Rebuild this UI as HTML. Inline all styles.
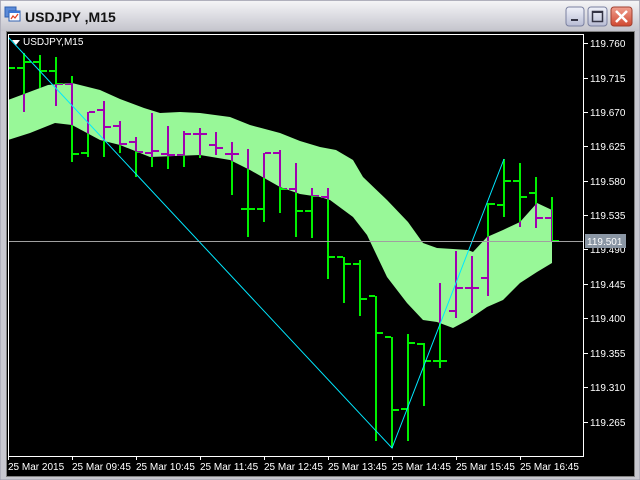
<!DOCTYPE html>
<html><head><meta charset="utf-8"><style>
html,body{margin:0;padding:0;width:640px;height:480px;overflow:hidden;background:#d4d0c8}
svg{display:block}
text{font-family:"Liberation Sans",sans-serif}
</style></head><body>
<svg id="s" width="640" height="480" xmlns="http://www.w3.org/2000/svg">
<defs>
<linearGradient id="tb" x1="0" y1="0" x2="0" y2="1">
<stop offset="0" stop-color="#f4f4f6"/><stop offset="0.5" stop-color="#dcdce2"/><stop offset="1" stop-color="#c4c4cc"/></linearGradient>
<linearGradient id="bt" x1="0" y1="0" x2="0" y2="1"><stop offset="0" stop-color="#f0f2fa"/><stop offset="1" stop-color="#b8bcd4"/></linearGradient>
<linearGradient id="rx" x1="0" y1="0" x2="0" y2="1"><stop offset="0" stop-color="#f0a090"/><stop offset="1" stop-color="#d04830"/></linearGradient>
<clipPath id="band"><polygon id="bp" points=""/></clipPath>
<clipPath id="plot"><rect x="8" y="35" width="575" height="421"/></clipPath>
</defs>
<rect x="0" y="0" width="640" height="480" fill="#c8c8d0"/>
<rect x="1" y="1" width="638" height="30" fill="url(#tb)"/>
<rect x="0" y="0" width="640" height="480" fill="none" stroke="#9898a8"/>
<!-- icon -->
<rect x="5" y="7" width="11" height="10" fill="#5a8ad8" stroke="#3060b0"/>
<rect x="9" y="11" width="11" height="10" fill="#fff" stroke="#3060b0"/>
<rect x="9" y="11" width="11" height="2" fill="#3a78d8"/>
<polyline points="11,19 13,16 15,18 18,14" fill="none" stroke="#e04020" stroke-width="1.2"/>
<text x="25" y="22" font-size="14" font-weight="bold" fill="#111">USDJPY ,M15</text>
<!-- buttons -->
<rect x="566" y="7" width="18" height="19" rx="3" fill="url(#bt)" stroke="#7a80a0"/>
<rect x="571" y="19" width="7" height="2" fill="#334"/>
<rect x="588" y="7" width="19" height="19" rx="3" fill="url(#bt)" stroke="#7a80a0"/>
<rect x="592.5" y="11.5" width="10" height="10" fill="none" stroke="#334" stroke-width="1.5"/>
<rect x="593" y="11" width="10" height="2" fill="#334"/>
<rect x="611" y="7" width="21" height="19" rx="3" fill="url(#rx)" stroke="#a04030"/>
<path d="M616 11 L627 22 M627 11 L616 22" stroke="#fff" stroke-width="2.5"/>
<!-- chart area -->
<rect x="6" y="31" width="629" height="446" fill="#000"/>
<rect x="6.5" y="31.5" width="628" height="445" fill="none" stroke="#808080"/>
<g id="chart" clip-path="url(#plot)"></g>
<line x1="8" y1="241.5" x2="583" y2="241.5" stroke="#a0a0a0"/>
<rect x="8.5" y="34.5" width="575" height="422" fill="none" stroke="#fff"/>
<polygon points="12,40 20,40 16,45" fill="#fff"/>
<text x="23" y="45" font-size="10" fill="#fff">USDJPY,M15</text>
<g font-size="10" fill="#fff" id="ax">
<text x="590" y="47">119.760</text>
<text x="590" y="82">119.715</text>
<text x="590" y="116">119.670</text>
<text x="590" y="150">119.625</text>
<text x="590" y="185">119.580</text>
<text x="590" y="219">119.535</text>
<text x="590" y="253">119.490</text>
<text x="590" y="288">119.445</text>
<text x="590" y="322">119.400</text>
<text x="590" y="357">119.355</text>
<text x="590" y="391">119.310</text>
<text x="590" y="426">119.265</text>
</g>
<rect x="585" y="234" width="41" height="14" fill="#8a96a4"/>
<text x="587" y="245" font-size="10" fill="#fff">119.501</text>
<g font-size="10" fill="#fff">
<text x="8" y="470">25 Mar 2015</text>
<text x="72" y="470">25 Mar 09:45</text>
<text x="136" y="470">25 Mar 10:45</text>
<text x="200" y="470">25 Mar 11:45</text>
<text x="264" y="470">25 Mar 12:45</text>
<text x="328" y="470">25 Mar 13:45</text>
<text x="392" y="470">25 Mar 14:45</text>
<text x="456" y="470">25 Mar 15:45</text>
<text x="520" y="470">25 Mar 16:45</text>
</g>
<g id="ticks" stroke="#fff"></g>
</svg>
<script>
var NS="http://www.w3.org/2000/svg";
function el(t,a,p){var e=document.createElementNS(NS,t);for(var k in a)e.setAttribute(k,a[k]);p.appendChild(e);return e;}
var up=[[8,100],[40,88],[48,85],[72,83],[100,90],[120,99],[144,108],[160,113],[180,112],[200,113],[230,117],[250,125],[280,133],[300,141],[320,147],[336,150],[353,160],[363,177],[387,200],[408,222],[423,243],[437,248],[453,249],[468,250],[473,252],[487,237],[503,230],[520,222],[537,203],[552,210]];
var lo=[[8,140],[30,133],[55,123],[72,125],[100,140],[120,145],[150,157],[200,155],[230,160],[250,170],[280,187],[300,194],[320,197],[330,200],[353,217],[367,235],[387,277],[407,303],[423,320],[437,322],[453,328],[468,320],[487,307],[503,300],[520,283],[537,272],[552,263]];
var pts=up.map(function(p){return p.join(",")}).concat(lo.slice().reverse().map(function(p){return p.join(",")})).join(" ");
document.getElementById("bp").setAttribute("points",pts);
var ch=document.getElementById("chart");
el("polygon",{points:pts,fill:"#98f898"},ch);
var bars=[[8,60,75,68,68],[24,53,112,68,62],[40,55,88,62,71],[56,57,106,71,84],[72,76,162,84,154],[88,112,157,153,112],[104,101,157,110,127],[120,121,153,126,144],[136,137,177,142,152],[152,113,167,153,151],[168,126,169,154,155],[184,131,167,155,134],[200,128,158,134,134],[216,132,155,145,148],[232,142,195,154,154],[248,149,237,209,209],[264,153,222,209,153],[280,150,213,153,189],[296,163,237,189,211],[312,188,238,211,196],[328,188,279,197,257],[344,257,303,257,264],[360,260,316,264,299],[376,296,441,296,333],[392,337,448,337,410],[408,334,441,409,343],[424,343,406,344,361],[440,283,368,361,361],[456,251,318,311,288],[472,256,313,288,288],[488,203,296,278,204],[504,159,217,205,181],[520,163,227,181,197],[536,177,228,193,218],[552,197,241,218,241]];
function drawBars(g,c){bars.forEach(function(b){var x=b[0];
el("rect",{x:x-1,y:b[1],width:2,height:b[2]-b[1],fill:c},g);
el("rect",{x:x-7,y:b[3]-1,width:6,height:2,fill:c},g);
el("rect",{x:x+1,y:b[4]-1,width:6,height:2,fill:c},g);});}
var gg=el("g",{},ch);drawBars(gg,"#00f000");
var gp=el("g",{"clip-path":"url(#band)"},ch);drawBars(gp,"#a000b0");
el("polyline",{points:"8,37 392,448 504,159",fill:"none",stroke:"#00e8ff","stroke-width":"1"},ch);
var t=document.getElementById("ticks");
[43,78,112,146,181,215,249,284,318,353,387,422].forEach(function(y){el("line",{x1:584,y1:y+.5,x2:588,y2:y+.5},t)});
[8,72,136,200,264,328,392,456,520].forEach(function(x){el("line",{x1:x+.5,y1:456,x2:x+.5,y2:460},t)});
</script>
</body></html>
